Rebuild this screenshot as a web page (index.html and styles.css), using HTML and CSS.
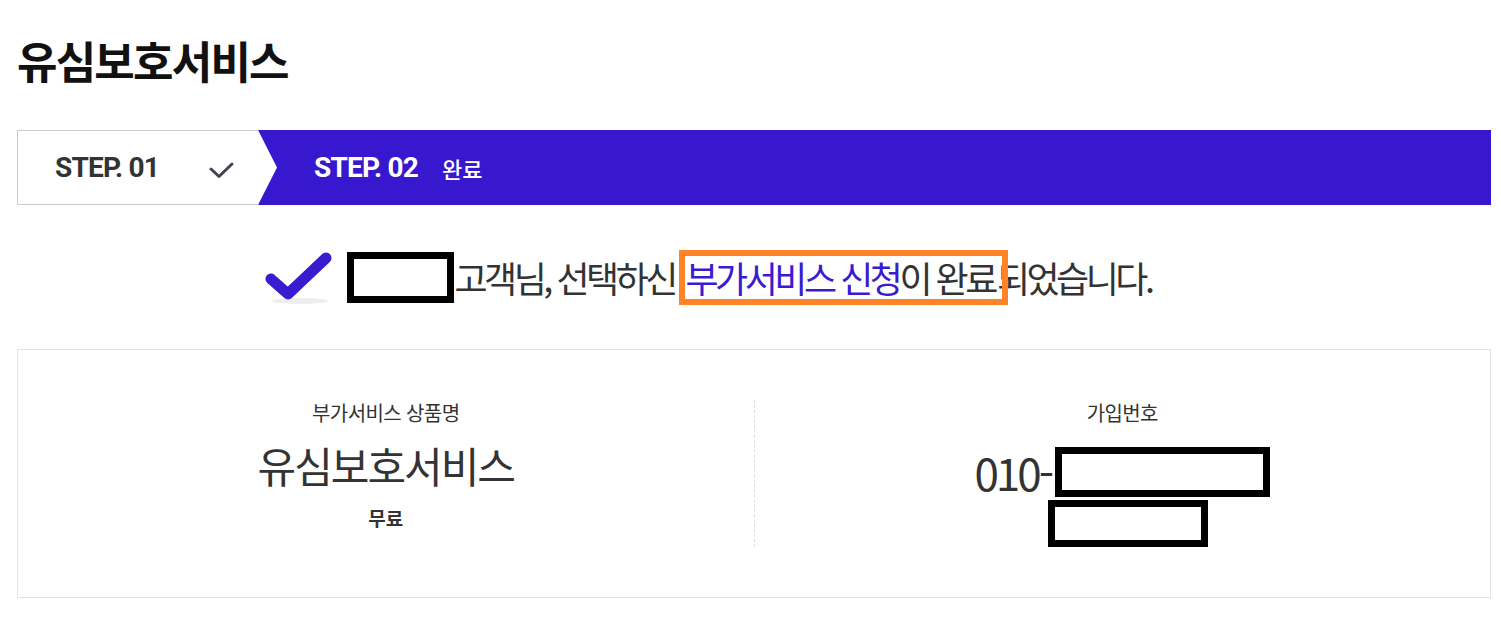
FILE: index.html
```html
<!DOCTYPE html>
<html lang="ko">
<head>
  <meta charset="UTF-8">
  <meta name="viewport" content="width=device-width, initial-scale=1.0">
  <title>유심보호서비스</title>
  <link rel="stylesheet" href="styles.css">
</head>
<body>

<div class="page">
  <h1 class="title">유심보호서비스</h1>

  <div class="steps">
    <div class="step step-done">
      <span class="step-num">STEP. 01</span>
      <svg class="step-check" width="28" height="20" viewBox="0 0 28 20">
        <polyline points="3,9 11,16.5 24,4" fill="none" stroke="#45434f" stroke-width="3" stroke-linecap="round" stroke-linejoin="round"/>
      </svg>
    </div>
    <div class="step step-current">
      <span class="step-num">STEP. 02</span>
      <span class="step-name">완료</span>
    </div>
  </div>

  <div class="result">
    <svg class="result-icon" width="74" height="60" viewBox="0 0 74 60">
      <ellipse cx="38" cy="54" rx="28" ry="3" fill="#000" opacity="0.07"/>
      <polyline points="9,32 26,47 64,11" fill="none" stroke="#3a1bcf" stroke-width="11" stroke-linecap="round" stroke-linejoin="round"/>
    </svg>
    <p class="result-msg"><span class="masked masked-name"></span>고객님, 선택하신 <span class="mark"><span class="point">부가서비스 신청</span>이 완료</span>되었습니다.</p>
  </div>

  <div class="info">
    <div class="info-col">
      <p class="info-label">부가서비스 상품명</p>
      <p class="info-value">유심보호서비스</p>
      <p class="info-sub">무료</p>
    </div>
    <div class="info-col info-col-line">
      <p class="info-label">가입번호</p>
      <p class="info-value info-num">010-<span class="masked masked-num"></span></p>
      <span class="masked masked-sub"></span>
    </div>
  </div>
</div>

</body>
</html>
```

FILE: styles.css
```css
body {
  margin: 0;
  font-family: "Noto Sans CJK KR", "Noto Sans", sans-serif;
  color: #333;
  background: #fff;
}

p {
  margin: 0;
}

.page {
  padding: 0 10px 0 17px;
}

.title {
  margin: 0;
  padding-top: 35px;
  font-size: 44px;
  line-height: 50px;
  font-weight: 700;
  letter-spacing: -1.8px;
  color: #111;
}

/* step bar */
.steps {
  display: flex;
  height: 75px;
  margin-top: 45px;
  background: #3718ce;
}

.step {
  display: flex;
  align-items: center;
  box-sizing: border-box;
}

.step-num {
  font-family: Roboto, "Liberation Sans", sans-serif;
  font-size: 28px;
  font-weight: 700;
  letter-spacing: -0.8px;
}

.step-done {
  width: 260px;
  padding-left: 37px;
  background: #fff;
  border: 1px solid #ccc;
  border-right: none;
  clip-path: polygon(0 0, 241px 0, 260px 50%, 241px 100%, 0 100%);
}

.step-done .step-num {
  color: #333;
}

.step-check {
  margin: 4px 0 0 49px;
}

.step-current {
  flex: 1;
  padding-left: 37px;
  color: #fff;
}

.step-name {
  margin-left: 24px;
  font-size: 22px;
  font-weight: 500;
}

/* result message */
.result {
  display: flex;
  align-items: center;
  justify-content: center;
  height: 56px;
  margin-top: 44px;
  padding-right: 94px;
}

.result-icon {
  margin-right: 11px;
}

.result-msg {
  display: flex;
  align-items: center;
  font-size: 36px;
  letter-spacing: -3.5px;
  white-space: pre;
  color: #333;
}

.masked {
  display: inline-block;
  box-sizing: border-box;
  border: 7px solid #000;
  background: #fff;
}

.masked-name {
  width: 107px;
  height: 51px;
}

.mark {
  position: relative;
  display: inline-block;
  margin: 0 -11px 0 -3px;
  padding: 0 7px 0 1px;
  border: 6px solid #ff8427;
  line-height: 43px;
}

.point {
  color: #3a1bcf;
}

/* info box */
.info {
  display: flex;
  margin-top: 44px;
  padding: 50px 0;
  border: 1px solid #e3e3e3;
}

.info-col {
  flex: 1;
  display: flex;
  flex-direction: column;
  align-items: center;
}

.info-col-line {
  border-left: 1px dashed #ddd;
}

.info-label {
  font-size: 20px;
  line-height: 26px;
  letter-spacing: -0.6px;
}

.info-value {
  display: flex;
  align-items: center;
  margin-top: 14px;
  font-size: 42px;
  line-height: 50px;
  letter-spacing: -2px;
}

.info-sub {
  margin-top: 15px;
  font-size: 19px;
  font-weight: 700;
  line-height: 26px;
}

.info-num {
  margin-top: 21px;
  font-size: 44px;
  letter-spacing: -3px;
}

.masked-num {
  width: 215px;
  height: 50px;
  margin-left: 4px;
  letter-spacing: 0;
}

.masked-sub {
  width: 160px;
  height: 47px;
  margin: 3px 0 0 11px;
}
```
